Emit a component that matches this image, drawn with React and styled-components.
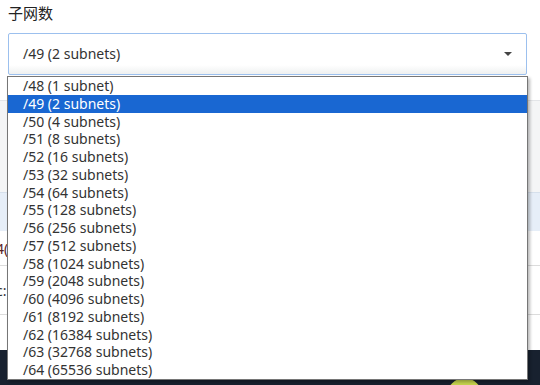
import styled, { createGlobalStyle } from "styled-components";

const GlobalStyle = createGlobalStyle`
  html, body {
    margin: 0;
    padding: 0;
    background: #ffffff;
  }
  body {
    font-family: "Noto Sans", "Liberation Sans", sans-serif;
  }
`;

const Page = styled.div`
  position: relative;
  width: 540px;
  height: 385px;
  overflow: hidden;
  background: #fff;
`;

const Field = styled.div`
  padding: 0 13px 0 8px;
`;

const Label = styled.div`
  height: 33px;
  box-sizing: border-box;
  padding-top: 2px;
  font-family: "Noto Sans CJK SC", "Noto Sans", sans-serif;
  font-size: 15px;
  line-height: 22px;
  color: #222;
`;

const SelectBox = styled.div`
  height: 42px;
  box-sizing: border-box;
  border: 1px solid #9cc0ee;
  border-radius: 2px;
  display: flex;
  align-items: center;
  justify-content: space-between;
  padding: 0 14px 1px 14px;
  font-size: 14px;
  color: #333;
  background: linear-gradient(to bottom, #fff 0%, #fff 78%, #eef0f0 100%);
`;

const Caret = styled.span`
  width: 0;
  height: 0;
  border-left: 4px solid transparent;
  border-right: 4px solid transparent;
  border-top: 4px solid #444;
  margin-top: 1px;
`;

const Backdrop = styled.div`
  display: flex;
  flex-direction: column;
`;

const Band = styled.div`
  height: ${(p) => p.$h}px;
  box-sizing: border-box;
  background: ${(p) => p.$bg || "#fff"};
  border-top: ${(p) => (p.$line ? `1px solid ${p.$line}` : "none")};
  display: flex;
  align-items: center;
  font-size: 14px;
  color: ${(p) => p.$color || "#333"};
  overflow: hidden;
`;

const Clip = styled.span`
  margin-left: -4px;
  white-space: nowrap;
`;

const Footer = styled.div`
  height: 35px;
  background: #18212f;
  display: flex;
  justify-content: flex-end;
  padding-top: 28px;
  box-sizing: border-box;
  overflow: hidden;
`;

const Badge = styled.div`
  width: 35px;
  height: 35px;
  border-radius: 50%;
  box-sizing: border-box;
  border: 7px solid #c4d24c;
  background: #1c2433;
  margin-right: 58px;
  flex: none;
`;

const List = styled.ul`
  position: absolute;
  top: 76px;
  left: 7px;
  width: 521px;
  margin: 0;
  padding: 0;
  list-style: none;
  box-sizing: border-box;
  background: #fff;
  border: 1px solid #767676;
  box-shadow: 2px 2px 3px rgba(0, 0, 0, 0.28);
`;

const Option = styled.li`
  height: 17.75px;
  line-height: 17.75px;
  padding-left: 15px;
  font-size: 14px;
  color: ${(p) => (p.$active ? "#fff" : "#333")};
  background: ${(p) => (p.$active ? "#1967d2" : "transparent")};
  white-space: nowrap;
`;

const options = Array.from({ length: 17 }, (_, i) => {
  const prefix = 48 + i;
  const count = 2 ** i;
  return {
    prefix,
    label: `/${prefix} (${count} ${count === 1 ? "subnet" : "subnets"})`,
  };
});

export default function App() {
  const selected = 49;
  return (
    <Page>
      <GlobalStyle />
      <Field>
        <Label>子网数</Label>
        <SelectBox>
          <span>/49 (2 subnets)</span>
          <Caret />
        </SelectBox>
      </Field>

      <Backdrop>
        <Band $h={25} />
        <Band $h={92} $bg="#f4f5f6" $line="#e3e5e8" />
        <Band $h={39} $bg="#e6eef8" $line="#d6e0ec" />
        <Band $h={34} $color="#5a2424">
          <Clip>4(</Clip>
        </Band>
        <Band $h={49} $line="#dcdcdc">
          <Clip>c:b</Clip>
        </Band>
        <Band $h={36} $line="#dcdcdc" />
        <Footer>
          <Badge />
        </Footer>
      </Backdrop>

      <List>
        {options.map((o) => (
          <Option key={o.prefix} $active={o.prefix === selected}>
            {o.label}
          </Option>
        ))}
      </List>
    </Page>
  );
}
